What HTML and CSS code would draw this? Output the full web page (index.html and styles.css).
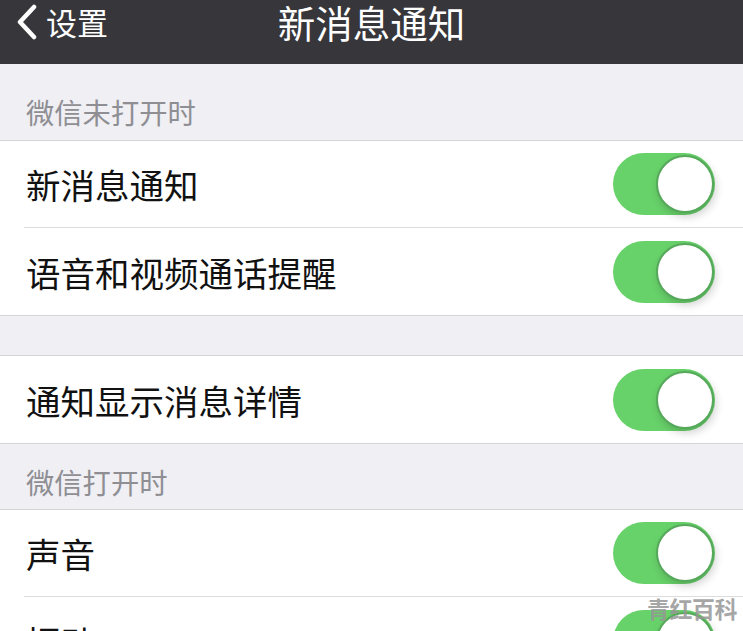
FILE: index.html
```html
<!DOCTYPE html>
<html lang="zh">
<head>
<meta charset="utf-8">
<link rel="stylesheet" href="styles.css">
</head>
<body>
<div class="nav">
  <div class="back">
    <svg class="chev" width="22" height="36" viewBox="0 0 22 36"><path d="M18 3 L4 18 L18 33" fill="none" stroke="#fff" stroke-width="4.5" stroke-linecap="round" stroke-linejoin="round"/></svg>
    <span>设置</span>
  </div>
  <div class="title">新消息通知</div>
</div>
<div class="section-head first">微信未打开时</div>
<div class="group">
  <div class="row"><span class="label">新消息通知</span><span class="toggle"><span class="knob"></span></span></div>
  <div class="row"><span class="label">语音和视频通话提醒</span><span class="toggle"><span class="knob"></span></span></div>
</div>
<div class="gap"></div>
<div class="group">
  <div class="row"><span class="label">通知显示消息详情</span><span class="toggle"><span class="knob"></span></span></div>
</div>
<div class="section-head second">微信打开时</div>
<div class="group">
  <div class="row"><span class="label">声音</span><span class="toggle"><span class="knob"></span></span></div>
  <div class="row"><span class="label">振动</span><span class="toggle"><span class="knob"></span></span></div>
</div>
<div class="watermark">青红百科</div>
</body>
</html>
```
FILE: styles.css
```css
* { box-sizing: border-box; }
html, body { margin: 0; padding: 0; }
body {
  width: 743px;
  height: 631px;
  overflow: hidden;
  background: #efeff4;
  font-family: "Noto Sans CJK SC", "Noto Sans", sans-serif;
  position: relative;
}
.nav {
  height: 64px;
  background: #36363b;
  color: #fff;
  position: relative;
  display: flex;
  align-items: flex-start;
}
.back {
  display: flex;
  align-items: center;
  padding-left: 16px;
  height: 44px;
  font-size: 31px;
  gap: 8px;
}
.back span { line-height: 44px; }
.title {
  position: absolute;
  left: 0; right: 0; top: 0;
  text-align: center;
  font-size: 37.5px;
  line-height: 44px;
  padding-left: 0;
}
.section-head {
  color: #8e8e93;
  font-size: 28.3px;
  padding-left: 26px;
  display: flex;
  align-items: center;
  border-bottom: 1px solid #d4d4d8;
}
.section-head.first { height: 77px; padding-top: 18px; }
.section-head.second { height: 67px; padding-top: 10px; border-top: 1px solid #d4d4d8; }
.group {
  background: #fff;
  padding-left: 24px;
}
.row {
  height: 87px;
  display: flex;
  align-items: center;
  justify-content: space-between;
  border-bottom: 1px solid #dcdcdf;
  padding-right: 28px;
}
.group .row:last-child { border-bottom: none; }
.label {
  font-size: 34.5px;
  color: #111;
  padding-left: 2px;
}
.gap {
  height: 41px;
  border-top: 1px solid #d4d4d8;
  border-bottom: 1px solid #d4d4d8;
}
.toggle {
  width: 102px;
  height: 62px;
  border-radius: 31px;
  background: #68d26a;
  position: relative;
  display: block;
}
.knob {
  position: absolute;
  right: 1px;
  top: 2px;
  width: 58px;
  height: 58px;
  border-radius: 50%;
  background: #fff;
  border: 2px solid #56a85a;
  box-shadow: 2px 4px 8px rgba(0,0,0,0.18);
}
.watermark {
  position: absolute;
  right: 6px;
  bottom: 6px;
  font-size: 23px;
  font-weight: 700;
  color: rgba(150,150,150,0.85);
  letter-spacing: -0.5px;
}
```
